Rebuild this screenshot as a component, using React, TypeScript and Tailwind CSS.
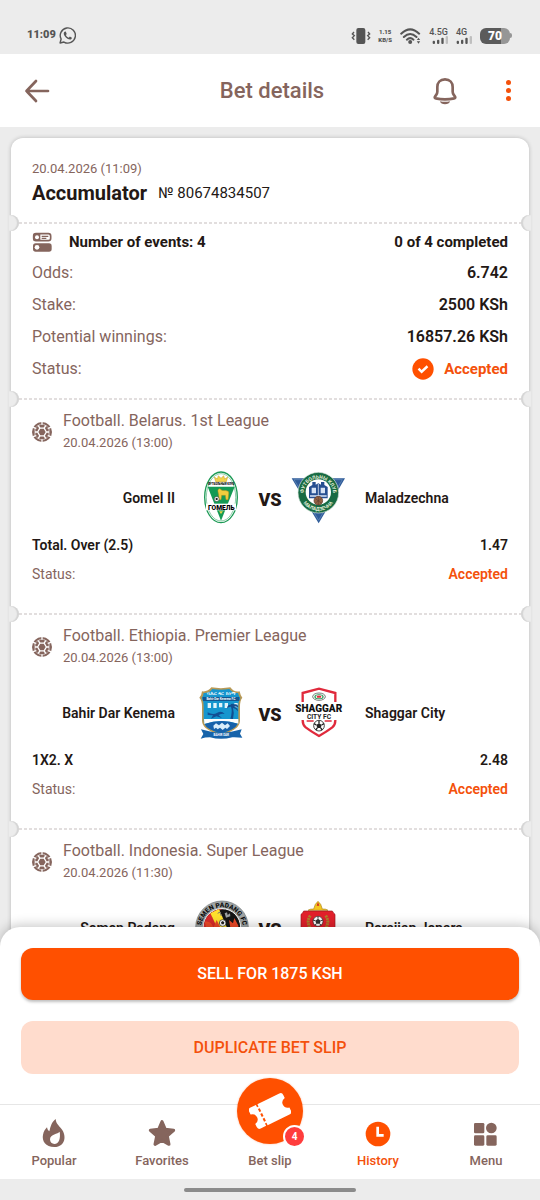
import type { ReactNode } from "react";

type Team = { name: string; crest: ReactNode };

type BetEvent = {
  league: string;
  date: string;
  home: Team;
  away: Team;
  market?: string;
  odds?: string;
};

const events: BetEvent[] = [
  {
    league: "Football. Belarus. 1st League",
    date: "20.04.2026 (13:00)",
    home: { name: "Gomel II", crest: <GomelCrest /> },
    away: { name: "Maladzechna", crest: <MaladzechnaCrest /> },
    market: "Total. Over (2.5)",
    odds: "1.47",
  },
  {
    league: "Football. Ethiopia. Premier League",
    date: "20.04.2026 (13:00)",
    home: { name: "Bahir Dar Kenema", crest: <BahirDarCrest /> },
    away: { name: "Shaggar City", crest: <ShaggarCrest /> },
    market: "1X2. X",
    odds: "2.48",
  },
  {
    league: "Football. Indonesia. Super League",
    date: "20.04.2026 (11:30)",
    home: { name: "Semen Padang", crest: <SemenPadangCrest /> },
    away: { name: "Persijap Jepara", crest: <PersijapCrest /> },
  },
];

const summary = [
  { label: "Odds:", value: "6.742" },
  { label: "Stake:", value: "2500 KSh" },
  { label: "Potential winnings:", value: "16857.26 KSh" },
];

export default function App() {
  return (
    <div className="flex h-screen flex-col overflow-hidden bg-[#ececec] font-[Roboto,sans-serif] text-[#231815]">
      <StatusBar />
      <AppBar />

      <main className="min-h-0 flex-1 overflow-y-auto px-[11px] pt-[11px] [scrollbar-width:none]">
        <div className="rounded-xl bg-white shadow-[0_0_4px_rgba(0,0,0,0.22)]">
          <section className="px-[21px] pt-5 pb-4">
            <p className="text-[13px] leading-[22px] text-[#85655d]">20.04.2026 (11:09)</p>
            <div className="flex items-center gap-[11px]">
              <h2 className="text-xl leading-[26px] font-bold">Accumulator</h2>
              <span className="text-[15px]">№ 80674834507</span>
            </div>
          </section>
          <Perforation />

          <section className="px-[21px] pt-[3px] pb-[13px] text-base">
            <div className="flex h-[30px] items-center text-[15px] font-bold">
              <EventsIcon />
              <span className="ml-[17px]">Number of events: 4</span>
              <span className="ml-auto">0 of 4 completed</span>
            </div>
            <dl>
              {summary.map((row) => (
                <div key={row.label} className="flex h-8 items-center justify-between">
                  <dt className="text-[#85655d]">{row.label}</dt>
                  <dd className="font-semibold">{row.value}</dd>
                </div>
              ))}
              <div className="flex h-8 items-center justify-between">
                <dt className="text-[#85655d]">Status:</dt>
                <dd className="flex items-center gap-[10px] text-[15px] font-bold text-[#f4510b]">
                  <CheckIcon />
                  Accepted
                </dd>
              </div>
            </dl>
          </section>

          {events.map((event) => (
            <EventItem key={event.league} event={event} />
          ))}
        </div>
      </main>

      <div className="relative z-10 -mt-5 flex flex-col gap-[21px] rounded-t-[20px] bg-white px-[21px] pt-[21px] pb-[30px] shadow-[0_-2px_12px_rgba(0,0,0,0.22)]">
        <button className="h-[52px] rounded-xl bg-[#ff5000] text-base font-medium text-white shadow-[0_2px_3px_rgba(0,0,0,0.25)]">
          SELL FOR 1875 KSH
        </button>
        <button className="h-[53px] rounded-xl bg-[#ffdccd] text-base font-medium text-[#f4510b]">
          DUPLICATE BET SLIP
        </button>
      </div>

      <BottomNav />
      <div className="flex h-[21px] shrink-0 items-center justify-center">
        <div className="h-1 w-[172px] rounded-full bg-[#8b8b8b]" />
      </div>
    </div>
  );
}

function StatusBar() {
  return (
    <div className="flex h-[54px] shrink-0 items-center pt-[17px] pr-[28px] pl-[27px] text-[#555]">
      <span className="text-[11px] font-black">11:09</span>
      <svg viewBox="0 0 24 24" className="ml-[3px] size-[17px]" fill="none" stroke="currentColor" strokeWidth="2">
        <path d="M1.5 22.5 3 17A10.7 10.7 0 1 1 7 21.2Z" strokeLinejoin="round" />
        <path
          fill="currentColor"
          stroke="none"
          d="M8.7 6.5c-.8 0-2 1.1-2 2.8 0 3.7 5.2 8.4 8.8 8.4 1.6 0 2.6-1.2 2.7-2.6l-2.9-1.6-1.5 1.5c-1.8-.7-3.3-2-4-3.8l1.1-1.4-1.1-2.9c-.2-.3-.6-.4-1.1-.4Z"
        />
      </svg>

      <div className="ml-auto flex items-center">
        <svg viewBox="0 0 60 48" className="h-4 w-5" fill="none" stroke="currentColor" strokeWidth="4">
          <rect x="16" y="0" width="27" height="48" rx="6" fill="currentColor" stroke="none" />
          <path d="M9 12 4 18l6 5-6 6 6 6M51 12l5 6-6 5 6 6-6 6" />
        </svg>
        <div className="ml-[6px] w-4 text-center text-[6px] leading-[8px] font-black">
          <div>1.15</div>
          <div>KB/S</div>
        </div>
        <svg viewBox="0 0 62 48" className="ml-[7px] h-4 w-[21px]" fill="none" stroke="currentColor" strokeWidth="6">
          <path d="M3 17Q30-9 57 17M11 27Q30 9 49 27" strokeLinecap="round" />
          <path d="M20 35Q30 26 40 35" strokeLinecap="round" />
          <circle cx="30" cy="42" r="6" fill="currentColor" stroke="none" />
          <path d="m50 36 5-7 5 7ZM50 40h10l-5 7Z" fill="currentColor" stroke="none" />
        </svg>
        <Signal label="4.5G" />
        <Signal label="4G" />
        <div className="ml-2 flex h-4 w-[30px] items-center justify-center overflow-hidden rounded-[6px] bg-[linear-gradient(90deg,#5b5b5b_70%,#969696_70%)] text-[12px] font-black text-white">
          70
        </div>
        <div className="h-[5px] w-[2px] rounded-r bg-[#969696]" />
      </div>
    </div>
  );
}

function Signal({ label }: { label: string }) {
  return (
    <div className="ml-2 flex min-w-4 flex-col">
      <span className="text-[9px] leading-[9px] font-medium">{label}</span>
      <svg viewBox="0 0 48 24" className="-mt-px h-2 w-4 self-end" fill="currentColor">
        <rect x="2" y="14" width="7" height="10" rx="3" />
        <rect x="15" y="11" width="7" height="13" rx="3" />
        <rect x="28" y="5" width="7" height="19" rx="3" />
        <rect x="41" y="0" width="7" height="24" rx="3" opacity=".3" />
      </svg>
    </div>
  );
}

function AppBar() {
  return (
    <header className="flex h-[73px] shrink-0 items-center justify-between bg-white pr-5 pl-6 text-[#85655d]">
      <div className="flex flex-1">
        <button aria-label="Back">
          <svg viewBox="0 0 26 26" className="size-[26px]" fill="none" stroke="currentColor" strokeWidth="2.7" strokeLinecap="round" strokeLinejoin="round">
            <path d="M24 13H2.5M12 3 2.5 13l9.5 10" />
          </svg>
        </button>
      </div>
      <h1 className="text-center text-[22px] font-medium">Bet details</h1>
      <div className="flex flex-1 items-center justify-end gap-[38px]">
        <button aria-label="Notifications">
          <svg viewBox="0 0 78 84" className="h-7 w-[26px]" fill="none">
            <path
              d="M39 7C24 7 16 17 16 30v14c0 8-4 9-8 17q0 3 3 3 28 6 56 0 3 0 3-3c-4-8-8-9-8-17V30C62 17 54 7 39 7Z"
              stroke="currentColor"
              strokeWidth="8"
              strokeLinejoin="round"
            />
            <path d="M24 73q15 3 30 0c-1 12-29 12-30 0Z" fill="currentColor" />
          </svg>
        </button>
        <button aria-label="More" className="flex w-6 flex-col items-center gap-[3px]">
          <i className="size-[5px] rounded-full bg-[#f4510b]" />
          <i className="size-[5px] rounded-full bg-[#f4510b]" />
          <i className="size-[5px] rounded-full bg-[#f4510b]" />
        </button>
      </div>
    </header>
  );
}

function Perforation() {
  return (
    <div className="relative h-[2px]">
      <div className="mx-2 h-[2px] bg-[repeating-linear-gradient(90deg,#e2dede_0_3px,#fff_3px_5px)]" />
      <div className="absolute -top-[7px] -left-[2px] h-4 w-[10px] rounded-r-full bg-[#ececec] shadow-[inset_-2px_0_1px_#d4d4d4]" />
      <div className="absolute -top-[7px] -right-[2px] h-4 w-[10px] rounded-l-full bg-[#ececec] shadow-[inset_2px_0_1px_#d4d4d4]" />
    </div>
  );
}

function EventItem({ event }: { event: BetEvent }) {
  return (
    <>
      <Perforation />
      <section className="px-[21px] pt-[10px] pb-6 text-sm">
        <div className="flex items-center gap-[11px] text-[#85655d]">
          <FootballIcon />
          <div>
            <h3 className="text-base leading-[22px]">{event.league}</h3>
            <p className="text-[13px] leading-[22px]">{event.date}</p>
          </div>
        </div>

        <div className="mt-4 flex h-14 items-center font-semibold">
          <span className="flex-1 pr-5 text-right">{event.home.name}</span>
          <span className="w-[54px]">{event.home.crest}</span>
          <span className="w-[42px] pt-1 text-center text-lg font-black">VS</span>
          <span className="w-[54px]">{event.away.crest}</span>
          <span className="flex-1 pl-5">{event.away.name}</span>
        </div>

        {event.market && (
          <>
            <div className="mt-[5px] flex h-7 items-center justify-between font-semibold">
              <span>{event.market}</span>
              <span>{event.odds}</span>
            </div>
            <div className="flex h-[30px] items-center justify-between">
              <span className="text-[#85655d]">Status:</span>
              <span className="font-semibold text-[#f4510b]">Accepted</span>
            </div>
          </>
        )}
      </section>
    </>
  );
}

function BottomNav() {
  return (
    <nav className="relative z-20 grid h-[75px] shrink-0 grid-cols-5 border-t border-[#e6e6e6] bg-white text-[13px] font-medium text-[#85655d]">
      <NavItem label="Popular">
        <svg viewBox="0 0 84 84" className="size-7" fill="currentColor">
          <path
            fillRule="evenodd"
            d="M47 0c1 14 9 19 17 29 16 19 14 54-21 55C17 84 5 66 9 47c2-10 7-17 12-22 1 6 3 10 7 12 4-16 7-28 19-37ZM59 38c-5 8-28 6-29 23 0 9 6 14 13 14 15 0 19-19 16-37Z"
          />
        </svg>
      </NavItem>
      <NavItem label="Favorites">
        <svg viewBox="0 0 84 84" className="size-7" fill="currentColor" stroke="currentColor" strokeWidth="9" strokeLinejoin="round">
          <path d="m42 8 10 23 25 3-19 17 5 25-21-12-21 12 5-25L7 34l25-3Z" />
        </svg>
      </NavItem>
      <a href="#" className="relative flex flex-col items-center justify-end pb-2">
        <span className="absolute -top-[27px] flex size-[66px] items-center justify-center rounded-full bg-[#ff5000] shadow-[0_0_2px_rgba(255,80,0,0.4)]">
          <svg viewBox="0 0 126 126" className="size-[42px]" fill="white">
            <g transform="rotate(-26 63 63)">
              <path d="M15 28h18v8h5v-8h73q9 0 9 9v10q-14 3-14 16t14 16v10q0 9-9 9H38v-8h-5v8H15q-9 0-9-9V79q14-3 14-16T6 47V37q0-9 9-9Z" />
              <path d="M36 42v42" stroke="#ff5000" strokeWidth="6" strokeDasharray="10 6" />
            </g>
          </svg>
          <span className="absolute -right-[3px] -bottom-[4px] flex size-[23px] items-center justify-center rounded-full border-2 border-white bg-[#ff3d3d] text-[10px] font-bold text-white">
            4
          </span>
        </span>
        <span className="leading-5">Bet slip</span>
      </a>
      <NavItem label="History" active>
        <svg viewBox="0 0 84 84" className="size-7">
          <circle cx="42" cy="45" r="37" fill="#ff5000" />
          <path d="M41 23v26h18" fill="none" stroke="white" strokeWidth="8" />
        </svg>
      </NavItem>
      <NavItem label="Menu">
        <svg viewBox="0 0 84 84" className="size-7" fill="currentColor">
          <rect x="6" y="12" width="31" height="31" rx="4" />
          <circle cx="58" cy="27" r="16" />
          <rect x="6" y="49" width="31" height="31" rx="4" />
          <rect x="43" y="49" width="31" height="31" rx="4" />
        </svg>
      </NavItem>
    </nav>
  );
}

function NavItem({ label, active, children }: { label: string; active?: boolean; children: ReactNode }) {
  return (
    <a
      href="#"
      className={`flex flex-col items-center justify-end gap-[4px] pb-2 ${active ? "text-[#f4510b]" : ""}`}
    >
      {children}
      <span className="leading-5">{label}</span>
    </a>
  );
}

function EventsIcon() {
  return (
    <svg viewBox="0 0 60 60" className="size-5 text-[#85655d]" fill="none">
      <rect x="5" y="5" width="51" height="21" rx="7" stroke="currentColor" strokeWidth="5" />
      <path d="M5 5h20v21H5Z" fill="currentColor" />
      <circle cx="15" cy="16" r="6" fill="white" />
      <path d="M29 13h20M29 19h14" stroke="currentColor" strokeWidth="4" />
      <rect x="3" y="34" width="56" height="25" rx="8" fill="currentColor" />
      <circle cx="15" cy="46" r="7" fill="white" />
    </svg>
  );
}

function CheckIcon() {
  return (
    <svg viewBox="0 0 64 64" className="size-[22px]" fill="none">
      <circle cx="32" cy="32" r="31" fill="#ff5000" />
      <path d="m19 31 9 9 17-16" stroke="white" strokeWidth="7" />
    </svg>
  );
}

function FootballIcon() {
  return (
    <svg viewBox="0 0 60 60" className="size-5 text-[#85655d]" fill="none">
      <circle cx="30" cy="30" r="30" fill="currentColor" />
      <path d="M17 30 23.5 18.500h13L43 30l-6.500 11.500h-13Z" stroke="white" strokeWidth="4" />
      <path d="M17 30H9M43 30h8M23.5 18.5 19 11M36.500 18.5 41 11M23.500 41.5 19 49M36.500 41.5 41 49" stroke="white" strokeWidth="4" />
      <path d="M9 18v24M51 18v24M14 13l12-6M34 7l12 6M14 47l12 6M34 53l12-6" stroke="white" strokeWidth="2" />
      <path d="M30 0v9M30 51v9M3 16l10 3M57 16l-10 3M3 44l10-3M57 44l-10-3" stroke="white" strokeWidth="4" />
    </svg>
  );
}

function Crest({ children }: { children: ReactNode }) {
  return (
    <svg viewBox="0 0 162 168" className="h-14 w-[54px] font-[Roboto,sans-serif]">
      {children}
    </svg>
  );
}

function GomelCrest() {
  return (
    <Crest>
      <ellipse cx="78" cy="82" rx="49" ry="76" fill="white" stroke="#1c9a55" strokeWidth="4" />
      <ellipse cx="78" cy="82" rx="44" ry="71" fill="none" stroke="#1c9a55" strokeWidth="1.5" />
      <path d="m58 21 9 6 3-10 8 8 8-8 3 10 9-6-4 14H62Z" fill="#f3d34a" stroke="#c59a22" strokeWidth="1.5" />
      <text x="78" y="46" textAnchor="middle" fontSize="8" fontWeight="900">ФУТБОЛЬНЫЙ КЛУБ</text>
      <path d="M38 50h81L78 152Z" fill="#149a54" />
      <path d="M69 65c-2-8 6-12 9-6 6 5 14 1 18 4 5-1 6 5 5 10l-2 16h-6l-2-13H80l-2 13h-6l-1-15Z" fill="#f0cd3e" stroke="#b98f1c" strokeWidth="1.5" />
      <circle cx="65" cy="87" r="7.5" fill="white" stroke="#222" strokeWidth="1.5" />
      <path d="m65 83 4 3-2 4h-4l-2-4Z" fill="#222" />
      <path d="M33 101h90v20H33Z" fill="white" />
      <text x="79" y="119" textAnchor="middle" fontSize="20" fontWeight="900">ГОМЕЛЬ</text>
      <path d="m72 124 12 0-6 8Z" fill="#e5d348" />
    </Crest>
  );
}

function MaladzechnaCrest() {
  return (
    <Crest>
      <path d="M2 25h160L83 160Z" fill="#2e5b98" />
      <path d="M9 29h145L83 151Z" fill="none" stroke="#6d8fc0" strokeWidth="2" />
      <circle cx="82" cy="68" r="61" fill="#186b43" stroke="#dce8df" strokeWidth="2" />
      <path id="mala-top" d="M38 70a44 44 0 0 1 88 0" fill="none" />
      <text fontSize="15" fontWeight="700" fill="#e6efd9">
        <textPath href="#mala-top" startOffset="50%" textAnchor="middle">ФУТБОЛЬНЫ КЛУБ</textPath>
      </text>
      <path id="mala-bottom" d="M28 68a54 54 0 0 0 108 0" fill="none" />
      <text fontSize="15" fontWeight="700" fill="#e6efd9">
        <textPath href="#mala-bottom" startOffset="50%" textAnchor="middle">МАЛАДЗЕЧНА</textPath>
      </text>
      <circle cx="82" cy="66" r="38" fill="white" />
      <path d="M54 51l10-6v-9h10v8l8-4 8 4v-8h10v9l10 6v34H54Z" fill="#264f91" />
      <path d="M62 53h13v17H62ZM89 53h13v17H89ZM57 76h50v4H57Z" fill="#d7e3f4" />
      <path d="M82 42v36" stroke="white" strokeWidth="2" />
      <circle cx="82" cy="92" r="13" fill="#936142" stroke="#57382a" strokeWidth="2" />
      <path d="m73 86 18 13M91 86 73 99M82 80v25" stroke="#57382a" strokeWidth="1.5" />
    </Crest>
  );
}

function BahirDarCrest() {
  return (
    <Crest>
      <path d="M21 19q18 2 28-12 29 5 57 0 10 15 28 12 2 12 8 19-7 8-7 26v42c0 27-30 32-57 50-27-18-57-23-57-50V64q0-18-8-26 7-7 8-19Z" fill="#b89956" />
      <path d="M26 24q17 1 26-12 26 4 51 0 10 13 26 12 2 9 7 15-6 9-6 25v42c0 23-26 28-52 43-26-15-52-20-52-43V64q0-16-6-25 5-6 6-15Z" fill="#1696ce" />
      <text x="78" y="31" textAnchor="middle" fontSize="14" fontWeight="900" fill="white">ባሕር ዳር ከነማ</text>
      <path d="M23 36h110v12H24Z" fill="#15568f" />
      <text x="78" y="46" textAnchor="middle" fontSize="9" fontWeight="700" fill="white">Bahir Dar Kenema F.C</text>
      <path d="M38 54h10v15H38ZM55 54h10v15H55ZM72 54h10v13H72ZM89 54h10v15H89ZM118 54h10v13h-10Z" fill="#e2f5fb" />
      <path d="M106 101q7-20 2-36-8-1-12 6 1-13 10-11 4-7 12-2 10-3 12 9-7-4-13-2 12 3 12 14-6-9-15-10 5 16 0 33Z" fill="#134d8e" />
      <path d="M38 82q16 9 29 1 13-7 22 4-13-3-18 4l10 8-17-5-16 7 6-10-16-1Z" fill="#124f94" />
      <path d="M27 102h103v14q-52-16-102 1Z" fill="white" />
      <path d="M29 117q50-17 99-1-7 18-50 29-44-12-49-28Z" fill="#1762aa" />
      <path d="m55 122 8-7 9 6 9-8 9 8 8-6 7 8-9 9-5-4-8 7-8-7-7 5-5-5-6 4Z" fill="#d9eefa" />
      <path d="M18 133q60 20 122 0l-5 13 7 12q-24-2-30-1-34 9-67 0-15 0-28 4l8-14Z" fill="#1663aa" />
      <text x="79" y="153" textAnchor="middle" fontSize="9" fontWeight="700" fill="white">BAHIR DAR</text>
    </Crest>
  );
}

function ShaggarCrest() {
  return (
    <Crest>
      <path d="M35 24 84 11l49 13v82q0 14-9 21-16 12-40 26-24-14-40-26-9-7-9-21Z" fill="white" stroke="#e02a3c" strokeWidth="7" />
      <ellipse cx="84" cy="35" rx="19" ry="11" fill="white" stroke="#333" strokeWidth="2" />
      <ellipse cx="84" cy="35" rx="14" ry="7.5" fill="#2b9c5a" />
      <ellipse cx="84" cy="35" rx="10" ry="5" fill="white" />
      <ellipse cx="84" cy="35" rx="7" ry="3.5" fill="#e02a3c" />
      <path d="M17 51h130v34h-8v20H28V85H17Z" fill="white" />
      <text x="83" y="81" textAnchor="middle" fontSize="30" fontWeight="900" fill="#111">SHAGGAR</text>
      <text x="84" y="102" textAnchor="middle" fontSize="20" fontWeight="700" fill="#222">CITY FC</text>
      <path d="M47 108h21M101 108h21" stroke="#e02a3c" strokeWidth="4" />
      <circle cx="84" cy="122" r="16" fill="white" stroke="#222" strokeWidth="2.5" />
      <path d="m84 114 8 6-3 9H79l-3-9Z" fill="#222" />
      <path d="m84 114v-7M92 120l7-4M89 129l5 6M79 129l-5 6M76 120l-7-4" stroke="#222" strokeWidth="4" />
    </Crest>
  );
}

function SemenPadangCrest() {
  return (
    <Crest>
      <circle cx="81" cy="82" r="79" fill="#9fa5a6" stroke="#71777a" strokeWidth="2" />
      <path id="semen-arc" d="M19 84a62 62 0 0 1 124 0" fill="none" />
      <text fontSize="20" fontWeight="900" fill="#111">
        <textPath href="#semen-arc" startOffset="50%" textAnchor="middle">SEMEN PADANG FC</textPath>
      </text>
      <circle cx="81" cy="82" r="56" fill="#151515" stroke="white" strokeWidth="3" />
      <path d="M81 27a55 55 0 0 0-55 55q0 30 29 49l15-49-20-35Z" fill="#d92b2b" />
      <path d="m46 40 26-13 40 94-20 15Z" fill="#ffe22d" />
      <path d="M29 65q20-4 26 18L65 60l24 48H40ZM102 60l12 10 4-16 13 25-22 21Z" fill="#ef4a27" />
      <path d="m68 40 7-4 4 12" fill="none" stroke="#777" strokeWidth="3" />
      <circle cx="83" cy="69" r="10" fill="white" stroke="#222" strokeWidth="2" />
      <path d="m83 63 5 4-2 6h-6l-2-6Z" fill="#222" />
      <path d="m89 40 7-3 2 8 7-5 1 9-13 4Z" fill="#9ba0a1" />
    </Crest>
  );
}

function PersijapCrest() {
  return (
    <Crest>
      <path d="M51 31q7-5 17-4l5-14 8-9 8 9 5 14q10-1 17 4Z" fill="#f4c620" stroke="#aa831d" strokeWidth="2" />
      <path d="M38 33h86q6 10 8 10v62q0 34-51 55-51-21-51-55V43q5-2 8-10Z" fill="#e2202b" stroke="#981820" strokeWidth="2" />
      <path d="M58 47Q43 67 63 93M104 47q15 20-5 46" fill="none" stroke="#ad822a" strokeWidth="9" strokeDasharray="6 2" />
      <path d="m81 7 4 10h-8Z" fill="#cf2525" />
      <circle cx="81" cy="64" r="15" fill="white" stroke="#222" strokeWidth="2" />
      <path d="m81 56 8 6-3 9H76l-3-9Z" fill="#333" />
      <path d="M81 50v6M96 60l-7 2M90 76l-4-5M72 76l4-5M66 60l7 2" stroke="#333" strokeWidth="3" />
      <path d="M50 108h62v8H50Z" fill="#f4c620" />
    </Crest>
  );
}
